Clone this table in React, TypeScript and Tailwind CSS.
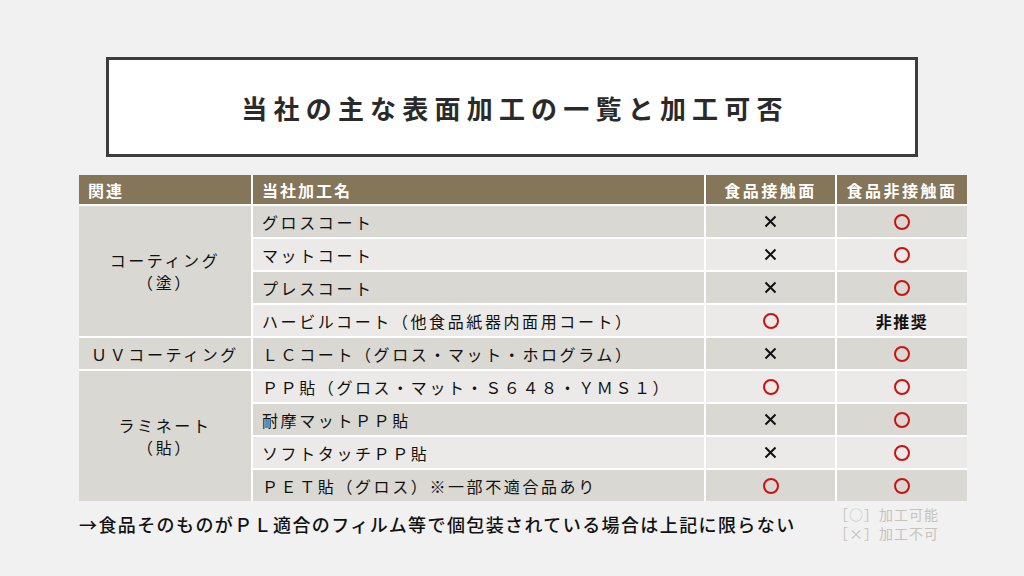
const font = { fontFamily: '"Noto Sans CJK JP", "Noto Sans", sans-serif' };

type Mark = "o" | "x" | "ng";

type Row = { name: string; contact: Mark; nonContact: Mark };

const coating: Row[] = [
  { name: "グロスコート", contact: "x", nonContact: "o" },
  { name: "マットコート", contact: "x", nonContact: "o" },
  { name: "プレスコート", contact: "x", nonContact: "o" },
  { name: "ハービルコート（他食品紙器内面用コート）", contact: "o", nonContact: "ng" },
];

const uv: Row = { name: "ＬＣコート（グロス・マット・ホログラム）", contact: "x", nonContact: "o" };

const laminate: Row[] = [
  { name: "ＰＰ貼（グロス・マット・Ｓ６４８・ＹＭＳ１）", contact: "o", nonContact: "o" },
  { name: "耐摩マットＰＰ貼", contact: "x", nonContact: "o" },
  { name: "ソフトタッチＰＰ貼", contact: "x", nonContact: "o" },
  { name: "ＰＥＴ貼（グロス）※一部不適合品あり", contact: "o", nonContact: "o" },
];

const DARK = "bg-[#d9d8d3]";
const LIGHT = "bg-[#ebeae8]";

function MarkCell({ mark, bg }: { mark: Mark; bg: string }) {
  return (
    <div className={`${bg} flex items-center justify-center`}>
      {mark === "o" && <span className="block w-[16px] h-[16px] rounded-full border-[2px] border-[#cc1111]" />}
      {mark === "x" && (
        <svg width="13" height="13" viewBox="0 0 13 13">
          <path d="M1.5 1.5 L11.5 11.5 M11.5 1.5 L1.5 11.5" stroke="#111" strokeWidth="2" />
        </svg>
      )}
      {mark === "ng" && <span className="text-[16px] font-bold text-[#111] tracking-[1.5px]">非推奨</span>}
    </div>
  );
}

function RowCells({ row, idx }: { row: Row; idx: number }) {
  const bg = idx % 2 === 0 ? DARK : LIGHT;
  return (
    <>
      <div className={`${bg} flex items-center pl-[9px] text-[16px] text-[#111] tracking-[2.6px] whitespace-nowrap`}>
        {row.name}
      </div>
      <MarkCell mark={row.contact} bg={bg} />
      <MarkCell mark={row.nonContact} bg={bg} />
    </>
  );
}

export default function App() {
  return (
    <div className="w-[1024px] h-[576px] bg-[#f1f1f1] flex flex-col overflow-hidden" style={font}>
      <div className="mt-[57px] ml-[106px] w-[812px] h-[100px] border-[3px] border-[#3d3d3d] bg-white flex items-center justify-center">
        <h1 className="text-[26px] font-bold text-[#2a2a2a] tracking-[6.2px] pl-[6px]">当社の主な表面加工の一覧と加工可否</h1>
      </div>

      <div className="mt-[18px] ml-[79px] w-[888px] grid grid-cols-[172px_451px_129px_130px] grid-rows-[29px_repeat(9,31px)] gap-[2px] bg-white">
        <div className="bg-[#867659] flex items-center pl-[9px] text-[16px] font-bold text-white tracking-[2px]">関連</div>
        <div className="bg-[#867659] flex items-center pl-[9px] text-[16px] font-bold text-white tracking-[2px]">当社加工名</div>
        <div className="bg-[#867659] flex items-center justify-center text-[16px] font-bold text-white tracking-[2.5px]">食品接触面</div>
        <div className="bg-[#867659] flex items-center justify-center text-[16px] font-bold text-white tracking-[2.5px]">食品非接触面</div>

        <div className={`${DARK} row-span-4 flex flex-col items-center justify-center text-[16px] text-[#111] tracking-[2.6px] leading-[22px]`}>
          <span>コーティング</span>
          <span>（塗）</span>
        </div>
        {coating.map((r, i) => (
          <RowCells key={r.name} row={r} idx={i} />
        ))}

        <div className={`${DARK} flex items-center justify-center text-[16px] text-[#111] tracking-[2.6px] whitespace-nowrap`}>
          ＵＶコーティング
        </div>
        <RowCells row={uv} idx={0} />

        <div className={`${DARK} row-span-4 flex flex-col items-center justify-center text-[16px] text-[#111] tracking-[2.6px] leading-[22px]`}>
          <span>ラミネート</span>
          <span>（貼）</span>
        </div>
        {laminate.map((r, i) => (
          <RowCells key={r.name} row={r} idx={i + 1} />
        ))}
      </div>

      <div className="ml-[79px] w-[888px] flex justify-between">
        <p className="mt-[10px] text-[18px] font-medium text-[#111] tracking-[1.4px] whitespace-nowrap">
          →食品そのものがＰＬ適合のフィルム等で個包装されている場合は上記に限らない
        </p>
        <div className="mt-[4px] mr-[28px] flex flex-col text-[14px] leading-[19px] text-[#c6c3be] tracking-[1px]">
          <span>［○］加工可能</span>
          <span>［×］加工不可</span>
        </div>
      </div>
    </div>
  );
}
